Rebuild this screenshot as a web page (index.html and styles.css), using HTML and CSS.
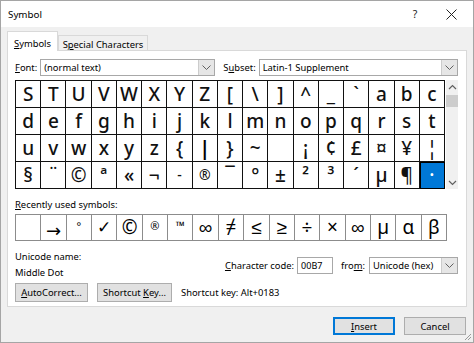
FILE: index.html
```html
<!DOCTYPE html>
<html>
<head>
<meta charset="utf-8">
<link rel="stylesheet" href="styles.css">
</head>
<body>
<div class="window">
  <div class="titlebar">
    <span class="title">Symbol</span>
    <span class="tb-help">?</span>
    <span class="tb-close"><svg width="11" height="11" viewBox="0 0 11 11"><path d="M0.5 0.5 L10.5 10.5 M10.5 0.5 L0.5 10.5" stroke="#222" stroke-width="1"/></svg></span>
  </div>
  <div class="body">
    <div class="tabs">
      <div class="tab active"><span><u>S</u>ymbols</span></div>
      <div class="tab"><span>S<u>p</u>ecial Characters</span></div>
    </div>
    <div class="panel">
      <div class="font-row">
        <span class="lbl"><u>F</u>ont:</span>
        <div class="combo combo-font"><span class="combo-text">(normal text)</span><span class="combo-btn"><svg width="9" height="6" viewBox="0 0 9 6"><path d="M0.5 0.5 L4.5 4.5 L8.5 0.5" fill="none" stroke="#606060"/></svg></span></div>
        <span class="lbl lbl-subset">S<u>u</u>bset:</span>
        <div class="combo combo-subset"><span class="combo-text">Latin-1 Supplement</span><span class="combo-btn"><svg width="9" height="6" viewBox="0 0 9 6"><path d="M0.5 0.5 L4.5 4.5 L8.5 0.5" fill="none" stroke="#606060"/></svg></span></div>
      </div>
      <div class="grid-wrap">
        <div class="grid">
          <span>S</span><span>T</span><span>U</span><span>V</span><span>W</span><span>X</span><span>Y</span><span>Z</span><span>[</span><span>\</span><span>]</span><span>^</span><span>_</span><span>`</span><span>a</span><span>b</span><span>c</span>
          <span>d</span><span>e</span><span>f</span><span>g</span><span>h</span><span>i</span><span>j</span><span>k</span><span>l</span><span>m</span><span>n</span><span>o</span><span>p</span><span>q</span><span>r</span><span>s</span><span>t</span>
          <span>u</span><span>v</span><span>w</span><span>x</span><span>y</span><span>z</span><span>{</span><span class="bar">|</span><span>}</span><span>~</span><span></span><span>¡</span><span>¢</span><span>£</span><span>¤</span><span>¥</span><span>¦</span>
          <span>§</span><span>¨</span><span>©</span><span>ª</span><span>«</span><span>¬</span><span class="sm">-</span><span class="sm">®</span><span>¯</span><span>°</span><span>±</span><span>²</span><span>³</span><span>´</span><span>µ</span><span>¶</span><span class="sel">·</span>
        </div>
        <div class="scrollbar">
          <span class="sb-btn"><svg width="9" height="6" viewBox="0 0 9 6"><path d="M1 5 L4.5 1.5 L8 5" fill="none" stroke="#606060" stroke-width="1.2"/></svg></span>
          <span class="sb-gap"></span>
          <span class="sb-thumb"></span>
          <span class="sb-track"></span>
          <span class="sb-btn"><svg width="9" height="6" viewBox="0 0 9 6"><path d="M1 1 L4.5 4.5 L8 1" fill="none" stroke="#606060" stroke-width="1.2"/></svg></span>
        </div>
      </div>
      <div class="recent-label"><u>R</u>ecently used symbols:</div>
      <div class="recent">
        <span></span><span class="arrow">→</span><span class="sup">°</span><span class="check">✓</span><span>©</span><span class="sup">®</span><span class="sup tm">™</span><span>∞</span><span>≠</span><span>≤</span><span>≥</span><span>÷</span><span>×</span><span>∞</span><span>µ</span><span>α</span><span>β</span>
      </div>
      <div class="info">
        <div class="info-left">
          <div>Unicode name:</div>
          <div>Middle Dot</div>
        </div>
        <div class="info-right">
          <span class="lbl"><u>C</u>haracter code:</span>
          <span class="code-box">00B7</span>
          <span class="lbl lbl-from">fro<u>m</u>:</span>
          <div class="combo combo-from"><span class="combo-text">Unicode (hex)</span><span class="combo-btn"><svg width="9" height="6" viewBox="0 0 9 6"><path d="M0.5 0.5 L4.5 4.5 L8.5 0.5" fill="none" stroke="#606060"/></svg></span></div>
        </div>
      </div>
      <div class="btn-row">
        <span class="btn btn-auto"><span><u>A</u>utoCorrect...</span></span>
        <span class="btn btn-short"><span>Shortcut <u>K</u>ey...</span></span>
        <span class="shortcut-text">Shortcut key: Alt+0183</span>
      </div>
    </div>
    <div class="footer">
      <span class="btn btn-insert"><span><u>I</u>nsert</span></span>
      <span class="btn btn-cancel"><span>Cancel</span></span>
    </div>
  </div>
  <svg class="grip" width="8" height="8" viewBox="0 0 8 8"><path d="M7 1 L1 7 M7 4 L4 7" stroke="#9a9a9a" stroke-width="1"/></svg>
</div>
</body>
</html>
```
FILE: styles.css
```css
html, body {
  margin: 0;
  padding: 0;
  background: #cfcfcf;
}
u { text-decoration: underline; text-underline-offset: 1px; }
.window {
  position: relative;
  width: 472px;
  height: 341px;
  border: 1px solid #a5a5a5;
  background: #f0f0f0;
  font-family: "Noto Sans", sans-serif;
  font-size: 9.4px;
  color: #000;
  display: flex;
  flex-direction: column;
  white-space: nowrap;
}
.titlebar {
  height: 26px;
  background: #ffffff;
  display: flex;
  align-items: center;
  flex-shrink: 0;
}
.title {
  padding-left: 7px;
  font-size: 9.8px;
}
.tb-help {
  margin-left: auto;
  width: 30px;
  text-align: center;
  font-size: 10.5px;
  color: #222;
}
.tb-close {
  width: 43px;
  display: flex;
  justify-content: center;
  align-items: center;
}
.body {
  flex: 1;
  padding: 4px 6px 0 6px;
  display: flex;
  flex-direction: column;
}
.tabs {
  display: flex;
  align-items: flex-end;
  height: 20px;
  margin-bottom: -1px;
  position: relative;
  z-index: 1;
}
.tab {
  box-sizing: border-box;
  height: 15px;
  width: 90px;
  border: 1px solid #d9d9d9;
  border-bottom: none;
  background: #f0f0f0;
  display: flex;
  align-items: center;
  justify-content: center;
  padding-top: 2px;
  margin-bottom: 1px;
}
.tab.active {
  height: 20px;
  width: 51px;
  background: #ffffff;
  margin-bottom: 0;
  padding-top: 4px;
}
.panel {
  box-sizing: border-box;
  height: 257px;
  border: 1px solid #d9d9d9;
  background: #ffffff;
  padding: 8px 8px 0 7px;
  display: flex;
  flex-direction: column;
}
.font-row {
  display: flex;
  align-items: center;
  height: 17px;
}
.lbl-subset { margin-left: 8px; }
.combo {
  box-sizing: border-box;
  height: 17px;
  border: 1px solid #a8a8a8;
  display: flex;
  align-items: center;
  background: #fff;
}
.combo-font { width: 175px; margin-left: 3px; }
.combo-subset { flex: 1; margin-left: 3px; }
.combo-from { width: 89px; margin-left: 4px; }
.combo-text {
  flex: 1;
  padding-left: 3px;
  white-space: nowrap;
  overflow: hidden;
}
.combo-btn {
  width: 15px;
  height: 15px;
  background: #e6e6e6;
  border-left: 1px solid #cccccc;
  display: flex;
  align-items: center;
  justify-content: center;
}
.grid-wrap {
  margin-top: 4px;
  display: flex;
}
.grid {
  box-sizing: border-box;
  width: 431px;
  display: grid;
  grid-template-columns: repeat(17, 1fr);
  grid-auto-rows: 27px;
  border-top: 1px solid #111;
  border-left: 1px solid #111;
  font-family: "Noto Sans", sans-serif;
  font-size: 19px;
  font-weight: 500;
  color: #111;
}
.grid span, .recent span {
  border-right: 1px solid #111;
  border-bottom: 1px solid #111;
  display: flex;
  align-items: center;
  justify-content: center;
  line-height: 1;
}
.grid .sm { font-size: 14px; }
.grid .bar { font-weight: 700; color: #000; }
.grid .sel {
  background: #0078d7;
  color: #fff;
  outline: 1px solid #000;
  outline-offset: -1px;
}
.scrollbar {
  width: 12px;
  margin-left: 1px;
  background: #f0f0f0;
  display: flex;
  flex-direction: column;
  height: 109px;
}
.sb-btn {
  height: 13px;
  display: flex;
  align-items: center;
  justify-content: center;
}
.sb-gap { height: 2px; }
.sb-thumb { height: 12px; background: #cdcdcd; }
.sb-track { flex: 1; }
.recent-label {
  margin-top: 8px;
  height: 16px;
  line-height: 16px;
}
.recent {
  box-sizing: border-box;
  margin-top: 1px;
  width: 432px;
  display: grid;
  grid-template-columns: repeat(17, 1fr);
  grid-auto-rows: 26px;
  border-top: 1px solid #8c8c8c;
  border-left: 1px solid #8c8c8c;
  font-size: 19px;
}
.recent span { border-color: #8c8c8c; }
.recent .arrow { font-family: "DejaVu Sans", sans-serif; font-size: 18px; padding-top: 6px; }
.recent .sup { font-size: 11px; align-items: flex-start; padding-top: 5px; }
.recent .tm { font-size: 12px; }
.recent .check { font-family: "DejaVu Sans", sans-serif; font-size: 17px; font-weight: bold; }
.info {
  margin-top: 8px;
  display: flex;
}
.info-left {
  width: 219px;
  line-height: 16px;
}
.info-right {
  display: flex;
  align-items: center;
  padding-top: 1px;
}
.code-box {
  box-sizing: border-box;
  width: 36px;
  height: 17px;
  border: 1px solid #a8a8a8;
  margin-left: 3px;
  padding-left: 3px;
  line-height: 15px;
  font-size: 9px;
}
.lbl-from { margin-left: 8px; }
.btn-row {
  margin-top: 2px;
  display: flex;
  align-items: center;
}
.btn {
  box-sizing: border-box;
  height: 19px;
  background: #e1e1e1;
  border: 1px solid #adadad;
  display: flex;
  align-items: center;
  justify-content: center;
}
.btn-auto { width: 73px; }
.btn-short { width: 75px; margin-left: 9px; }
.shortcut-text { margin-left: 9px; }
.footer {
  display: flex;
  justify-content: flex-end;
  padding-top: 10px;
  padding-right: 1px;
}
.btn-insert {
  width: 62px;
  height: 18px;
  border: 2px solid #0078d7;
}
.btn-cancel {
  width: 62px;
  height: 18px;
  margin-left: 9px;
}
.grip {
  position: absolute;
  right: 1px;
  bottom: 1px;
}
```
